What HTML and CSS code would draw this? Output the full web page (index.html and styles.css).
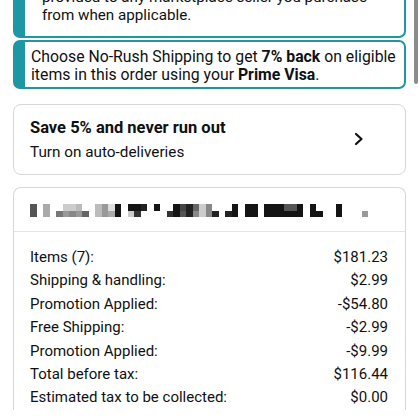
FILE: index.html
```html
<!DOCTYPE html>
<html>
<head>
<meta charset="utf-8">
<link rel="stylesheet" href="styles.css">
</head>
<body>
<div class="page">
  <div class="notice notice-first">
    <p class="notice-text indent">provided to any marketplace seller you purchase<br>from when applicable.</p>
  </div>
  <div class="notice notice-second">
    <p class="notice-text">Choose No-Rush Shipping to get <b>7% back</b> on eligible<br>items in this order using your <b>Prime Visa</b>.</p>
  </div>

  <div class="card promo">
    <div class="promo-text">
      <div class="promo-title">Save 5% and never run out</div>
      <div class="promo-sub">Turn on auto-deliveries</div>
    </div>
    <svg class="chev" width="12" height="14" viewBox="0 0 12 14"><polyline points="3,2 8.5,7 3,12" fill="none" stroke="#0f1111" stroke-width="2.2" stroke-linecap="round" stroke-linejoin="round"/></svg>
  </div>

  <div class="card summary">
    <div class="blur-row">
      <i class="c t5 b5"></i><i class="c tw bw"></i><i class="c ta ba"></i><i class="c tw bw"></i><i class="c tw b7"></i><i class="c tc b9"></i><i class="c tc b8"></i><i class="c tb b9"></i><i class="c tw b6"></i><i class="c tw bw"></i><i class="c tb bb"></i><i class="c t9 b9"></i><i class="c td ba"></i><i class="c t1 b1"></i><i class="c tw bw"></i><i class="c t1 bc"></i><i class="c t1 b3"></i><i class="c t2 bw"></i><i class="c tw bw"></i><i class="c t1 bw"></i><i class="c tw bw"></i><i class="c tw b3"></i><i class="c t1 b1"></i><i class="c t4 b5"></i><i class="c t2 b2"></i><i class="c t6 b8"></i><i class="c tc bc"></i><i class="c t8 b8"></i><i class="c tw b2"></i><i class="c tw bw"></i><i class="c tw b2"></i><i class="c t1 b1"></i><i class="c tw bw"></i><i class="c t1 b1"></i><i class="c t1 b1"></i><i class="c tw bw"></i><i class="c t1 b1"></i><i class="c t1 b1"></i><i class="c t1 b1"></i><i class="c t5 b1"></i><i class="c t5 b1"></i><i class="c t1 b1"></i><i class="c tw bw"></i><i class="c t1 b1"></i><i class="c tw b1"></i><i class="c tw bw"></i><i class="c tw bw"></i><i class="c t1 b1"></i><i class="c tw bw"></i><i class="c tw bw"></i><i class="c tw bw"></i><i class="c tw b9"></i>
    </div>
    <div class="rows">
      <div class="row"><span>Items (7):</span><span>$181.23</span></div>
      <div class="row"><span>Shipping &amp; handling:</span><span>$2.99</span></div>
      <div class="row"><span>Promotion Applied:</span><span>-$54.80</span></div>
      <div class="row"><span>Free Shipping:</span><span>-$2.99</span></div>
      <div class="row"><span>Promotion Applied:</span><span>-$9.99</span></div>
      <div class="row"><span>Total before tax:</span><span>$116.44</span></div>
      <div class="row"><span>Estimated tax to be collected:</span><span>$0.00</span></div>
    </div>
  </div>
</div>
<div class="scrollbar"></div>
</body>
</html>
```
FILE: styles.css
```css
html, body {
  margin: 0;
  padding: 0;
  background: #ffffff;
  overflow: hidden;
}
body {
  font-family: Roboto, "Noto Sans", Arial, sans-serif;
  color: #0f1111;
  width: 420px;
  height: 420px;
  position: relative;
}
.page {
  padding: 0 14px 0 13px;
}
.notice {
  border: 2px solid #1e97a5;
  border-left-width: 12px;
  border-radius: 7px;
  background: #fff;
}
.notice-first {
  margin-top: -22px;
  padding: 8px 8px 12px 0;
}
.notice-second {
  margin-top: 2px;
  padding: 6px 8px 3px 0;
}
.notice-text {
  margin: 0;
  font-size: 15.8px;
  line-height: 18px;
  padding-left: 6px;
}
.notice-text.indent {
  padding-left: 17px;
  font-size: 15.2px;
}
.notice-text b {
  font-weight: 700;
}
.card {
  border: 1px solid #d5d9d9;
  border-radius: 8px;
  background: #fff;
}
.promo {
  margin-top: 15px;
  padding: 12px 40px 12px 16px;
  display: flex;
  align-items: center;
  justify-content: space-between;
}
.promo-title {
  font-size: 16.5px;
  font-weight: 700;
  line-height: 22px;
}
.promo-sub {
  font-size: 15.3px;
  line-height: 20px;
  margin-top: 3px;
}
.chev {
  margin-top: -2px;
}
.summary {
  margin-top: 12px;
  border-bottom: none;
  border-radius: 8px 8px 0 0;
}
.blur-row {
  display: flex;
  padding: 16px 16px 14px 16px;
  border-bottom: 1px solid #e3e6e6;
}
.c {
  display: block;
  width: 6.5px;
  height: 13px;
  flex: none;
  background: linear-gradient(var(--t) 50%, var(--b) 50%);
}
.tw { --t: #ffffff; } .bw { --b: #ffffff; }
.t1 { --t: #141414; } .b1 { --b: #141414; }
.t2 { --t: #222222; } .b2 { --b: #222222; }
.t3 { --t: #333333; } .b3 { --b: #333333; }
.t4 { --t: #444444; } .b4 { --b: #444444; }
.t5 { --t: #555555; } .b5 { --b: #555555; }
.t6 { --t: #666666; } .b6 { --b: #666666; }
.t7 { --t: #777777; } .b7 { --b: #777777; }
.t8 { --t: #888888; } .b8 { --b: #888888; }
.t9 { --t: #999999; } .b9 { --b: #999999; }
.ta { --t: #aaaaaa; } .ba { --b: #aaaaaa; }
.tb { --t: #bbbbbb; } .bb { --b: #bbbbbb; }
.tc { --t: #cccccc; } .bc { --b: #cccccc; }
.td { --t: #dddddd; } .bd { --b: #dddddd; }
.rows {
  padding: 14px 17px 0 16px;
}
.row {
  display: flex;
  justify-content: space-between;
  font-size: 15px;
  line-height: 23.4px;
}
.scrollbar {
  position: absolute;
  right: 2px;
  top: 0;
  width: 4px;
  height: 84px;
  background: #8c8c8c;
  border-radius: 0 0 2px 2px;
}
```
